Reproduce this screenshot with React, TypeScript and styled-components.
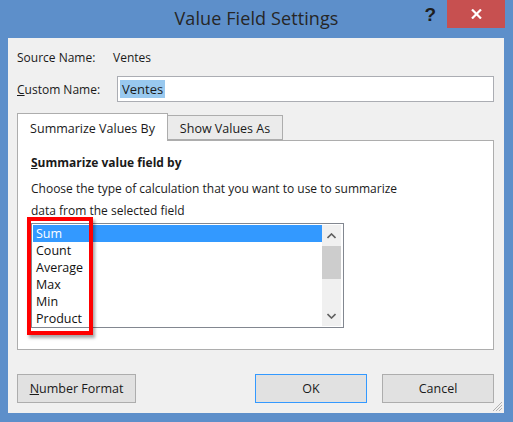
import styled, { createGlobalStyle } from "styled-components"

const GlobalStyle = createGlobalStyle`
    body {
        margin: 0;
        font-family: "Open Sans", "Noto Sans", sans-serif;
    }
`

const Window = styled.div`
    width: 513px;
    height: 422px;
    background: #5d8fca;
    display: flex;
    flex-direction: column;
    box-sizing: border-box;
`

const TitleBar = styled.div`
    height: 38px;
    display: grid;
    grid-template-columns: 1fr auto 1fr;
    align-items: start;
`

const Title = styled.div`
    font-family: "Open Sans", sans-serif;
    font-size: 18px;
    color: #262626;
    padding-top: 6px;
    letter-spacing: 0.1px;
`

const Controls = styled.div`
    display: flex;
    justify-content: flex-end;
    align-items: flex-start;
`

const Help = styled.span`
    font-family: "Liberation Sans", sans-serif;
    font-weight: bold;
    font-size: 19px;
    color: #1e1e1e;
    margin: 4px 11px 0 0;
`

const Close = styled.div`
    width: 58px;
    height: 28px;
    margin-right: 8px;
    background: #c75050;
    display: flex;
    align-items: center;
    justify-content: center;
`

const Client = styled.div`
    flex: 1;
    margin: 0 9px 9px 8px;
    background: #f0f0f0;
    display: flex;
    flex-direction: column;
    padding: 0 10px 0 9px;
    position: relative;
    font-size: 12px;
    color: #1a1a1a;
`

const Row = styled.div`
    display: flex;
    align-items: center;
`

const SourceRow = styled(Row)`
    height: 16px;
    margin-top: 11px;
`

const Label = styled.span<{ $width: number }>`
    width: ${p => p.$width}px;
`

const CustomRow = styled(Row)`
    margin-top: 11px;
    height: 26px;
`

const NameInput = styled.div`
    flex: 1;
    height: 26px;
    box-sizing: border-box;
    border: 1px solid #abadb3;
    background: #fff;
    padding: 3px 2px;
    display: flex;
    align-items: center;
`

const Selected = styled.span`
    background: #99c9ef;
    font-size: 13px;
    padding: 0 2px;
    line-height: 18px;
`

const Tabs = styled.div`
    display: flex;
    align-items: flex-end;
    margin-top: 11px;
    height: 27px;
`

const Tab = styled.div<{ $active?: boolean; $width: number }>`
    box-sizing: border-box;
    width: ${p => p.$width}px;
    height: ${p => (p.$active ? 28 : 25)}px;
    margin-bottom: ${p => (p.$active ? -1 : 0)}px;
    padding-top: ${p => (p.$active ? 6 : 4)}px;
    text-align: center;
    font-size: 12.5px;
    background: ${p => (p.$active ? "#fff" : "#ebebeb")};
    border: 1px solid #adadad;
    border-bottom: ${p => (p.$active ? "none" : "1px solid #adadad")};
    border-left: ${p => (p.$active ? "1px solid #adadad" : "none")};
    position: relative;
    z-index: ${p => (p.$active ? 1 : 0)};
`

const Panel = styled.div`
    height: 210px;
    box-sizing: border-box;
    background: #fff;
    border: 1px solid #adadad;
    padding: 13px 13px 0;
    position: relative;
`

const Heading = styled.div`
    font-weight: bold;
    font-size: 12px;
`

const Hint = styled.div`
    margin-top: 7px;
    line-height: 22px;
`

const ListBox = styled.div`
    margin-top: 1px;
    width: 313px;
    height: 105px;
    box-sizing: border-box;
    border: 1px solid #828790;
    padding: 1px;
    display: flex;
`

const Items = styled.div`
    flex: 1;
`

const Item = styled.div<{ $selected?: boolean }>`
    height: 17px;
    line-height: 17px;
    padding-left: 3px;
    font-size: 12.5px;
    background: ${p => (p.$selected ? "#3399ff" : "transparent")};
    color: ${p => (p.$selected ? "#fff" : "#111")};
`

const ScrollBar = styled.div`
    width: 19px;
    margin-right: 1px;
    background: #f0f0f0;
    display: flex;
    flex-direction: column;
    align-items: stretch;
`

const Arrow = styled.div`
    height: 21px;
    display: flex;
    align-items: center;
    justify-content: center;
`

const Thumb = styled.div`
    height: 33px;
    background: #cdcdcd;
`

const Track = styled.div`
    flex: 1;
`

const Callout = styled.div`
    position: absolute;
    left: 9px;
    top: 76px;
    width: 66px;
    height: 118px;
    box-sizing: border-box;
    border: 4px solid #ff0000;
    box-shadow: 2px 3px 3px rgba(0, 0, 0, 0.35);
`

const Footer = styled.div`
    display: flex;
    align-items: center;
    gap: 15px;
    margin-top: 24px;
`

const Button = styled.div<{ $width: number; $focused?: boolean }>`
    width: ${p => p.$width}px;
    height: 29px;
    box-sizing: border-box;
    background: #e1e1e1;
    border: 1px solid ${p => (p.$focused ? "#3399ff" : "#adadad")};
    display: flex;
    align-items: center;
    justify-content: center;
    font-size: 12.5px;
`

const Spacer = styled.div`
    flex: 1;
`

const Grip = styled.svg`
    position: absolute;
    right: 1px;
    bottom: 1px;
`

const Key = styled.span`
    text-decoration: underline;
`

const functions = ["Sum", "Count", "Average", "Max", "Min", "Product"]

const Chevron = ({ up }: { up?: boolean }) => (
    <svg width="9" height="6" viewBox="0 0 9 6">
        <path
            d={up ? "M0.5 5 L4.5 1 L8.5 5" : "M0.5 1 L4.5 5 L8.5 1"}
            fill="none"
            stroke="#606060"
            strokeWidth="1.6"
        />
    </svg>
)

const App = () => {
    return (
        <>
            <GlobalStyle />
            <Window>
                <TitleBar>
                    <span />
                    <Title>Value Field Settings</Title>
                    <Controls>
                        <Help>?</Help>
                        <Close>
                            <svg width="11" height="10" viewBox="0 0 11 10">
                                <path d="M1 0.5 L10 9.5 M10 0.5 L1 9.5" stroke="#fff" strokeWidth="2.2" />
                            </svg>
                        </Close>
                    </Controls>
                </TitleBar>
                <Client>
                    <SourceRow>
                        <Label $width={96}>Source Name:</Label>
                        <span>Ventes</span>
                    </SourceRow>
                    <CustomRow>
                        <Label $width={100}><Key>C</Key>ustom Name:</Label>
                        <NameInput>
                            <Selected>Ventes</Selected>
                        </NameInput>
                    </CustomRow>
                    <Tabs>
                        <Tab $active $width={151}>Summarize Values By</Tab>
                        <Tab $width={115}>Show Values As</Tab>
                    </Tabs>
                    <Panel>
                        <Heading><Key>S</Key>ummarize value field by</Heading>
                        <Hint>
                            Choose the type of calculation that you want to use to summarize
                            <br />
                            data from the selected field
                        </Hint>
                        <ListBox>
                            <Items>
                                {functions.map((name, index) => (
                                    <Item key={name} $selected={index === 0}>{name}</Item>
                                ))}
                            </Items>
                            <ScrollBar>
                                <Arrow><Chevron up /></Arrow>
                                <Thumb />
                                <Track />
                                <Arrow><Chevron /></Arrow>
                            </ScrollBar>
                        </ListBox>
                        <Callout />
                    </Panel>
                    <Footer>
                        <Button $width={119}><span><Key>N</Key>umber Format</span></Button>
                        <Spacer />
                        <Button $width={112} $focused>OK</Button>
                        <Button $width={112}>Cancel</Button>
                    </Footer>
                    <Grip width="10" height="10" viewBox="0 0 10 10">
                        <path d="M9 3 L3 9 M9 6 L6 9 M9 0 L0 9" stroke="#b0b0b0" strokeWidth="1" />
                    </Grip>
                </Client>
            </Window>
        </>
    )
}

export default App
